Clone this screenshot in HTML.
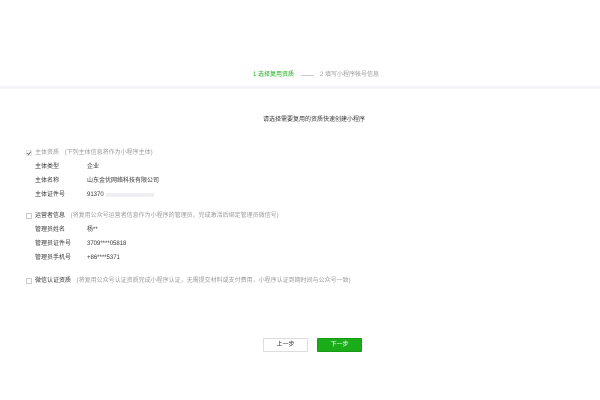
<!DOCTYPE html>
<html><head><meta charset="utf-8"><style>
*{margin:0;padding:0;box-sizing:border-box}
body{width:600px;height:400px;background:#fff;font-family:"Liberation Sans","Noto Sans CJK SC",sans-serif;font-size:6px;color:#353535;position:relative;overflow:hidden}
.a{position:absolute;white-space:nowrap;line-height:8px}
.band{position:absolute;left:0;top:86px;width:600px;height:3px;background:#f4f5f9}
.cb{position:absolute;width:6px;height:6px;border:1px solid #ccc;background:#fff}
.g{color:#9a9a9a}
.btn{position:absolute;top:338px;height:14px;width:45px;text-align:center;line-height:13px;font-size:6px;border-radius:1px}
</style></head><body>
<div class="a" style="left:253px;top:71px;color:#1aad19">1 选择复用资质</div>
<div style="position:absolute;left:301px;top:75px;width:13px;height:1px;background:#ccc"></div>
<div class="a g" style="left:320px;top:71px">2 填写小程序帐号信息</div>
<div class="band"></div>
<div class="a" style="left:263px;top:116px">请选择需要复用的资质快速创建小程序</div>

<div class="cb" style="left:26px;top:150px;border-color:#e4e4e4"></div>
<svg style="position:absolute;left:26px;top:150px" width="6" height="6"><path d="M1.2 3.2 L2.6 4.5 L4.9 1.6" stroke="#555" stroke-width="0.8" fill="none"/></svg>
<div class="a" style="left:35px;top:149px"><span class="g">主体资质</span> <span class="g" style="margin-left:4px">(下列主体信息将作为小程序主体)</span></div>
<div class="a" style="left:35px;top:163px">主体类型</div><div class="a" style="left:87px;top:163px">企业</div>
<div class="a" style="left:35px;top:177px">主体名称</div><div class="a" style="left:87px;top:177px">山东金优网络科技有限公司</div>
<div class="a" style="left:35px;top:191px">主体证件号</div><div class="a" style="left:87px;top:191px">91370</div>
<div style="position:absolute;left:106px;top:193px;width:48px;height:4px;background:#eeeef3"></div>

<div class="cb" style="left:26px;top:213px"></div>
<div class="a" style="left:35px;top:212px">运营者信息 <span class="g" style="margin-left:4px">(将复用公众号运营者信息作为小程序的管理员，完成激活后绑定管理员微信号)</span></div>
<div class="a" style="left:35px;top:226px">管理员姓名</div><div class="a" style="left:87px;top:226px">杨**</div>
<div class="a" style="left:35px;top:240px">管理员证件号</div><div class="a" style="left:87px;top:240px">3709****05818</div>
<div class="a" style="left:35px;top:254px">管理员手机号</div><div class="a" style="left:87px;top:254px">+86****5371</div>

<div class="cb" style="left:26px;top:278px"></div>
<div class="a" style="left:35px;top:277px">微信认证资质 <span class="g" style="margin-left:4px">(将复用公众号认证资质完成小程序认证，无需提交材料或支付费用，小程序认证到期时间与公众号一致)</span></div>

<div class="btn" style="left:263px;border:1px solid #ddd;background:#fff;color:#353535">上一步</div>
<div class="btn" style="left:317px;background:#1aad19;color:#fff;border:1px solid #179b16">下一步</div>
</body></html>
